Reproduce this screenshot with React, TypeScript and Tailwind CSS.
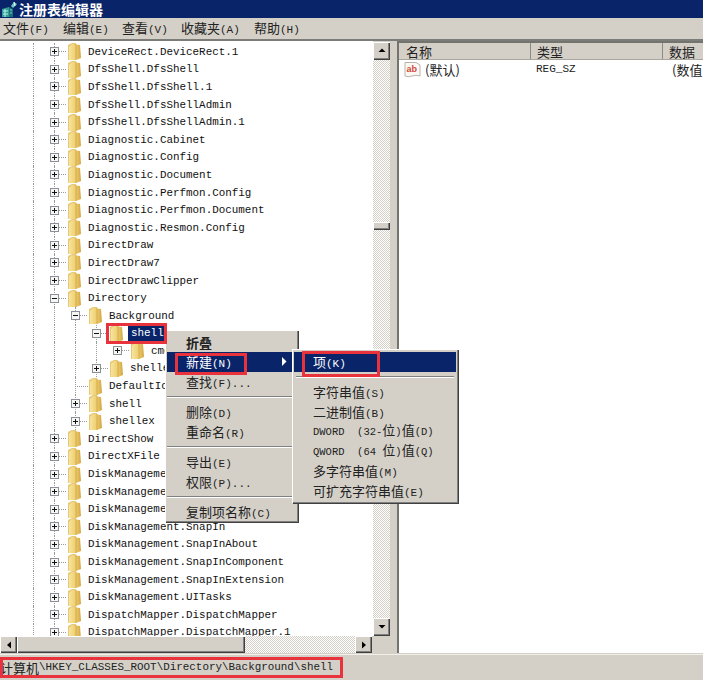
import type { ReactNode } from "react";

const MONO = "font-['Liberation_Mono','Noto_Sans_CJK_SC',monospace]";
const CJK = "font-['Noto_Sans_CJK_SC','Liberation_Mono',sans-serif]";
const HATCH = "bg-[repeating-conic-gradient(#d4d0c8_0_25%,#ffffff_0_50%)] bg-[length:2px_2px]";
const BEVEL = "bg-[#d4d0c8] shadow-[inset_1px_1px_0_#ffffff,inset_-1px_-1px_0_#404040,inset_-2px_-2px_0_#808080]";

type Row = { label: string; level: number; toggle?: "+" | "-"; guides: number[]; selected?: boolean };

const top = (label: string): Row => ({ label, level: 1, toggle: "+", guides: [33, 54] });

const rows: Row[] = [
  ...[
    "DeviceRect.DeviceRect.1",
    "DfsShell.DfsShell",
    "DfsShell.DfsShell.1",
    "DfsShell.DfsShellAdmin",
    "DfsShell.DfsShellAdmin.1",
    "Diagnostic.Cabinet",
    "Diagnostic.Config",
    "Diagnostic.Document",
    "Diagnostic.Perfmon.Config",
    "Diagnostic.Perfmon.Document",
    "Diagnostic.Resmon.Config",
    "DirectDraw",
    "DirectDraw7",
    "DirectDrawClipper",
  ].map(top),
  { label: "Directory", level: 1, toggle: "-", guides: [33, 54] },
  { label: "Background", level: 2, toggle: "-", guides: [33, 54, 75] },
  { label: "shell", level: 3, toggle: "-", guides: [33, 54, 75, 96], selected: true },
  { label: "cmd", level: 4, toggle: "+", guides: [33, 54, 75, 96] },
  { label: "shellex", level: 3, toggle: "+", guides: [33, 54, 75, 96] },
  { label: "DefaultIcon", level: 2, guides: [33, 54, 75] },
  { label: "shell", level: 2, toggle: "+", guides: [33, 54, 75] },
  { label: "shellex", level: 2, toggle: "+", guides: [33, 54, 75] },
  ...[
    "DirectShow",
    "DirectXFile",
    "DiskManagement.Connection",
    "DiskManagement.Control",
    "DiskManagement.DataObject",
    "DiskManagement.SnapIn",
    "DiskManagement.SnapInAbout",
    "DiskManagement.SnapInComponent",
    "DiskManagement.SnapInExtension",
    "DiskManagement.UITasks",
    "DispatchMapper.DispatchMapper",
    "DispatchMapper.DispatchMapper.1",
  ].map(top),
];

function Folder() {
  return (
    <svg width="15" height="19" viewBox="0 0 15 19" className="shrink-0">
      <defs>
        <linearGradient id="fold" x1="0" x2="1" y1="0" y2="0">
          <stop offset="0" stopColor="#f6e4a0" />
          <stop offset="0.55" stopColor="#efcf6e" />
          <stop offset="1" stopColor="#d2a544" />
        </linearGradient>
      </defs>
      <path d="M1 3 L5 1 L9 1 L9 17 L1 18 Z" fill="#e6c877" />
      <path d="M5 2 L13 3 L14 16 L9 18 L2 18 L2 5 Z" fill="url(#fold)" />
      <path d="M9 2 L9 18" stroke="#c19640" strokeWidth="1" opacity="0.6" />
    </svg>
  );
}

function Expander({ kind }: { kind?: "+" | "-" }) {
  return (
    <svg width="17" height="9" viewBox="0 0 17 9" className="shrink-0">
      <path d={kind ? "M9 4.5 H17" : "M4 4.5 H17"} stroke="#9a9a9a" strokeDasharray="1 1" />
      {kind && <rect x="0.5" y="0.5" width="8" height="8" fill="#f6f6f2" stroke="#8a8f98" />}
      {kind && <path d="M2 4.5 H7" stroke="#111" />}
      {kind === "+" && <path d="M4.5 2 V7" stroke="#111" />}
    </svg>
  );
}

function TreeRow({ row }: { row: Row }) {
  return (
    <div className="relative flex items-center h-[17.6px] whitespace-nowrap" style={{ paddingLeft: 50 + 21 * (row.level - 1) }}>
      {row.guides.map((x) => (
        <span key={x} className="absolute top-0 bottom-0 border-l border-dotted border-[#9a9a9a]" style={{ left: x }} />
      ))}
      <span className="relative flex items-center">
        <Expander kind={row.toggle} />
        <Folder />
      </span>
      <span
        className={`relative text-[10.9px] leading-[16px] ${MONO} ${
          row.selected ? "ml-[4px] pl-[3px] pr-[1px] bg-[#0a246a] text-white" : "ml-[6px] text-[#111]"
        }`}
      >
        {row.label}
      </span>
    </div>
  );
}

function Arrow({ dir }: { dir: "up" | "down" | "left" | "right" }) {
  const d = { up: "M4.5 5 L8 1.5 L11.5 5 Z", down: "M4.5 2 L8 5.5 L11.5 2 Z", left: "M6 4 L10 0.5 L10 7.5 Z", right: "M6 0.5 L10 4 L6 7.5 Z" }[dir];
  return (
    <svg width="16" height="8" viewBox="0 0 16 8">
      <path d={d} fill="#000" />
    </svg>
  );
}

function ScrollButton({ dir, className }: { dir: "up" | "down" | "left" | "right"; className: string }) {
  return (
    <div className={`flex items-center justify-center shrink-0 ${BEVEL} ${className}`}>
      <Arrow dir={dir} />
    </div>
  );
}

// CJK label with the small latin hotkey after it
function Label({ text, hot, bold }: { text: string; hot?: string; bold?: boolean }) {
  return (
    <span className="whitespace-pre">
      <span className={`text-[13px] ${CJK} ${bold ? "font-bold" : ""}`}>{text}</span>
      {hot && <span className={`text-[11px] ${MONO}`}>{hot}</span>}
    </span>
  );
}

function MenuItem({ children, active, arrow, pad, h }: { children: ReactNode; active?: boolean; arrow?: boolean; pad: string; h: string }) {
  return (
    <div className={`flex items-center justify-between pb-[2px] ${pad} ${h} ${active ? "bg-[#0a246a] text-white" : "text-[#222]"}`}>
      {children}
      {arrow && (
        <svg width="6" height="9" viewBox="0 0 6 9" className="mr-[9px]">
          <path d="M1 0 L5.5 4.5 L1 9 Z" fill="#fff" />
        </svg>
      )}
    </div>
  );
}

function Separator({ my }: { my: string }) {
  return <div className={`mx-[2px] h-[2px] border-t border-[#808080] border-b-white border-b ${my}`} />;
}

function RedBox({ className }: { className: string }) {
  return <div className={`absolute border-[3px] border-[#e8333c] ${className}`} />;
}

function AppIcon() {
  return (
    <svg width="17" height="17" viewBox="0 0 17 17" className="shrink-0">
      <path d="M1 8 L8 6 L8 16 L1 16 Z" fill="#2f9c96" />
      <path d="M8 6 L12 8 L12 16 L8 16 Z" fill="#1b6f78" />
      <path d="M2 10 H7 M2 13 H7 M4 8 V16" stroke="#bfeee6" strokeWidth="1" />
      <path d="M9 9 H11 M9 12 H11" stroke="#7fd8c8" />
      <path d="M10 5 L13 1 L16 3 L12 7 Z" fill="#6fd0c0" />
      <path d="M13 1 L14 5" stroke="#f4fbf8" />
    </svg>
  );
}

function StringIcon() {
  return (
    <svg width="17" height="17" viewBox="0 0 17 17" className="shrink-0">
      <path d="M1 1.5 H12 L16 4 V15 Q12 13.5 8 15 T1 15 Z" fill="#fbf8f4" stroke="#b9b2ac" />
      <text x="2.5" y="10.5" fontSize="9" fontWeight="700" fill="#cf4a3c" fontFamily="Liberation Sans, sans-serif">ab</text>
    </svg>
  );
}

export default function App() {
  return (
    <div className="relative flex flex-col w-[703px] h-[680px] overflow-hidden bg-[#d4d0c8]">
      <div className="flex items-center h-[18px] bg-[#0a246a] pl-[1px] gap-[1px]">
        <AppIcon />
        <span className={`text-[14px] font-bold text-white leading-none ${CJK}`}>注册表编辑器</span>
      </div>

      <div className="flex items-center h-[23px] pl-[3px] pb-[4px] border-b-2 border-[#7c7c78] text-[#222]">
        <span className="w-[60px]"><Label text="文件" hot="(F)" /></span>
        <span className="w-[59px]"><Label text="编辑" hot="(E)" /></span>
        <span className="w-[59px]"><Label text="查看" hot="(V)" /></span>
        <span className="w-[73px]"><Label text="收藏夹" hot="(A)" /></span>
        <span><Label text="帮助" hot="(H)" /></span>
      </div>

      <div className="flex h-[613px]">
        <div className="flex flex-col w-[390px]">
          <div className="flex h-[595px]">
            <div className="w-[373px] pt-[2px] bg-white overflow-hidden">
              {rows.map((row, i) => (
                <TreeRow key={i} row={row} />
              ))}
            </div>
            <div className="flex flex-col w-[17px]">
              <ScrollButton dir="up" className="h-[18px] mt-[1px]" />
              <div className={`h-[162px] ${HATCH}`} />
              <div className={`h-[8px] ${BEVEL}`} />
              <div className={`flex-1 ${HATCH}`} />
              <ScrollButton dir="down" className="h-[18px]" />
            </div>
          </div>
          <div className="flex h-[17px]">
            <ScrollButton dir="left" className="w-[17px]" />
            <div className={`w-[228px] ${BEVEL}`} />
            <div className={`w-[110px] ${HATCH}`} />
            <ScrollButton dir="right" className="w-[17px]" />
          </div>
        </div>

        <div className="w-[7px]" />

        <div className="flex-1 flex flex-col min-w-0 h-[612px] bg-white border-l-2 border-t-2 border-[#74746f]">
          <div className="flex h-[17px] shrink-0 bg-[#d4d0c8] text-[#222] border-b border-[#a9a69e]">
            <div className="flex items-center w-[132px] shrink-0 pl-[7px] border-r border-[#8c8a84]"><Label text="名称" /></div>
            <div className="flex items-center w-[132px] shrink-0 pl-[6px] border-r border-[#8c8a84]"><Label text="类型" /></div>
            <div className="flex items-center pl-[6px]"><Label text="数据" /></div>
          </div>
          <div className="flex items-center h-[18px] pl-[5px] text-[#222] whitespace-nowrap">
            <StringIcon />
            <span className="w-[111px] ml-[4px]"><Label text="(默认)" /></span>
            <span className={`w-[136px] text-[11px] ${MONO}`}>REG_SZ</span>
            <Label text="(数值" />
          </div>
        </div>
      </div>

      <div className="flex-1 flex items-center text-[#222] border-t border-[#f2f0ea] whitespace-pre">
        <span className={`text-[13px] ${CJK}`}>计算机</span>
        <span className={`text-[10.9px] ${MONO}`}>\HKEY_CLASSES_ROOT\Directory\Background\shell</span>
      </div>

      {/* context menu */}
      <div className="absolute left-[165px] top-[330px] w-[133px] h-[192px] pt-[3px] bg-[#d4d0c8] shadow-[inset_1px_1px_0_#ffffff,inset_-1px_-1px_0_#808080,1px_1px_0_#404040]">
        <MenuItem pad="pl-[21px]" h="h-[19px]"><Label text="折叠" bold /></MenuItem>
        <div className="mx-[2px]">
          <MenuItem pad="pl-[19px]" h="h-[20px]" active arrow><Label text="新建" hot="(N)" /></MenuItem>
        </div>
        <MenuItem pad="pl-[21px]" h="h-[20px]"><Label text="查找" hot="(F)..." /></MenuItem>
        <Separator my="my-[4px]" />
        <MenuItem pad="pl-[21px]" h="h-[20px]"><Label text="删除" hot="(D)" /></MenuItem>
        <MenuItem pad="pl-[21px]" h="h-[20px]"><Label text="重命名" hot="(R)" /></MenuItem>
        <Separator my="my-[4px]" />
        <MenuItem pad="pl-[21px]" h="h-[20px]"><Label text="导出" hot="(E)" /></MenuItem>
        <MenuItem pad="pl-[21px]" h="h-[20px]"><Label text="权限" hot="(P)..." /></MenuItem>
        <Separator my="my-[4px]" />
        <MenuItem pad="pl-[21px]" h="h-[20px]"><Label text="复制项名称" hot="(C)" /></MenuItem>
      </div>

      {/* submenu */}
      <div className="absolute left-[292px] top-[349px] w-[166px] h-[154px] pt-[3px] px-[2px] bg-[#d4d0c8] shadow-[inset_1px_1px_0_#ffffff,inset_-1px_-1px_0_#808080,1px_1px_0_#404040]">
        <MenuItem pad="pl-[19px]" h="h-[20px]" active><Label text="项" hot="(K)" /></MenuItem>
        <Separator my="my-[4px]" />
        <MenuItem pad="pl-[19px]" h="h-[19.8px]"><Label text="字符串值" hot="(S)" /></MenuItem>
        <MenuItem pad="pl-[19px]" h="h-[19.8px]"><Label text="二进制值" hot="(B)" /></MenuItem>
        <MenuItem pad="pl-[19px]" h="h-[19.8px]"><span className={`text-[10.5px] whitespace-pre ${MONO}`}>DWORD  (32-<span className={`text-[13px] ${CJK}`}>位</span>)<span className={`text-[13px] ${CJK}`}>值</span>(D)</span></MenuItem>
        <MenuItem pad="pl-[19px]" h="h-[19.8px]"><span className={`text-[10.5px] whitespace-pre ${MONO}`}>QWORD  (64 <span className={`text-[13px] ${CJK}`}>位</span>)<span className={`text-[13px] ${CJK}`}>值</span>(Q)</span></MenuItem>
        <MenuItem pad="pl-[19px]" h="h-[19.8px]"><Label text="多字符串值" hot="(M)" /></MenuItem>
        <MenuItem pad="pl-[19px]" h="h-[19.8px]"><Label text="可扩充字符串值" hot="(E)" /></MenuItem>
      </div>

      {/* annotations drawn over the screenshot */}
      <RedBox className="left-[106px] top-[323px] w-[61px] h-[21px]" />
      <RedBox className="left-[175px] top-[353px] w-[72px] h-[22px]" />
      <RedBox className="left-[302px] top-[351px] w-[78px] h-[26px]" />
      <RedBox className="left-0 top-[657px] w-[343px] h-[21px]" />
    </div>
  );
}
